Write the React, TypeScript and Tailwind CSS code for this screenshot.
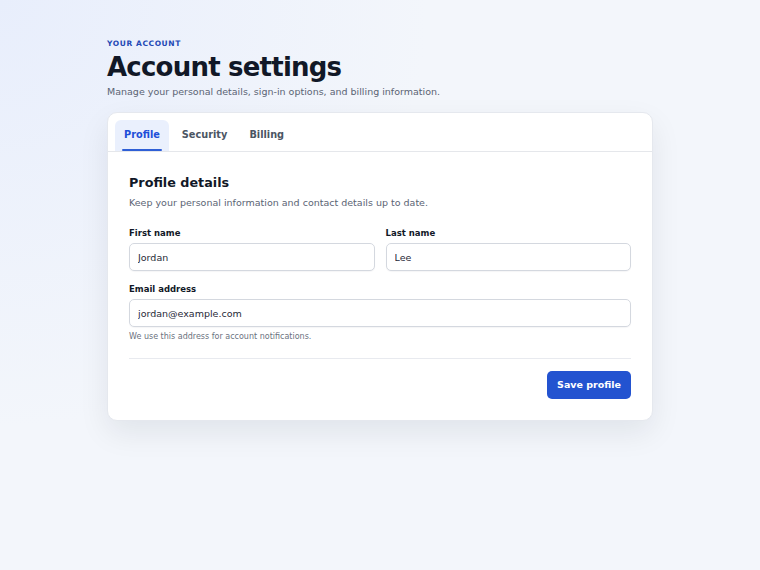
import { useState, type FC } from "react";

const tabs = ["Profile", "Security", "Billing"];

const Field: FC<{ label: string; value: string; help?: string }> = ({ label, value, help }) => (
  <label className="flex flex-col">
    <span className="text-[8.5px] font-bold leading-[12px] text-[#111827]">{label}</span>
    <input
      defaultValue={value}
      className="mt-[4px] h-[28px] rounded-[5px] border border-[#d4d8df] bg-white px-[8px] text-[9.5px] text-[#1f2937] shadow-[0_1px_1px_rgba(15,23,42,0.04)] focus:outline-none"
    />
    {help && <span className="mt-[4px] text-[8px] leading-[11px] text-[#6b7280]">{help}</span>}
  </label>
);

const App: FC = () => {
  const [active, setActive] = useState("Profile");

  return (
    <div className="min-h-screen bg-[#f3f6fb] bg-[radial-gradient(circle_at_0%_0%,#e8eefc_0%,rgba(243,246,251,0)_45%)] font-['DejaVu_Sans',sans-serif]">
      <div className="mx-auto w-[546px] pt-[39px]">
        <p className="text-[7.5px] font-bold uppercase leading-[10px] tracking-[0.08em] text-[#2449b5]">Your account</p>
        <h1 className="mt-[2px] text-[26px] font-bold leading-[32px] tracking-[-0.03em] text-[#111827]">Account settings</h1>
        <p className="mt-[2px] text-[9.5px] leading-[14px] text-[#5b6474]">
          Manage your personal details, sign-in options, and billing information.
        </p>

        <div className="mt-[13px] overflow-hidden rounded-[10px] border border-[#e5e8ee] bg-white shadow-[0_12px_30px_rgba(15,23,42,0.08)]">
          <div className="flex gap-[4px] border-b border-[#e5e7eb] px-[7px] pt-[7px]">
            {tabs.map((tab) => (
              <button
                key={tab}
                type="button"
                onClick={() => setActive(tab)}
                className={`relative h-[31px] rounded-t-[6px] px-[9px] text-[9.75px] font-bold ${
                  active === tab ? "bg-[#eaf0fd] text-[#1d4ed8]" : "text-[#4b5563]"
                }`}
              >
                {tab}
                {active === tab && (
                  <span className="absolute bottom-0 left-[7px] right-[7px] h-[2px] rounded-full bg-[#2f5fd6]" />
                )}
              </button>
            ))}
          </div>

          <div className="px-[21px] pb-[21px] pt-[22px]">
            <h2 className="text-[12.75px] font-bold leading-[18px] text-[#111827]">Profile details</h2>
            <p className="mt-[4px] text-[9.5px] leading-[14px] text-[#5b6474]">
              Keep your personal information and contact details up to date.
            </p>

            <div className="mt-[17px] grid grid-cols-2 gap-[11px]">
              <Field label="First name" value="Jordan" />
              <Field label="Last name" value="Lee" />
            </div>
            <div className="mt-[12px]">
              <Field label="Email address" value="jordan@example.com" help="We use this address for account notifications." />
            </div>

            <div className="mt-[16px] flex justify-end border-t border-[#e8eaef] pt-[12px]">
              <button
                type="button"
                className="h-[28px] rounded-[5px] bg-[#2353d0] px-[10px] text-[9.5px] font-bold text-white"
              >
                Save profile
              </button>
            </div>
          </div>
        </div>
      </div>
    </div>
  );
};

export default App;
